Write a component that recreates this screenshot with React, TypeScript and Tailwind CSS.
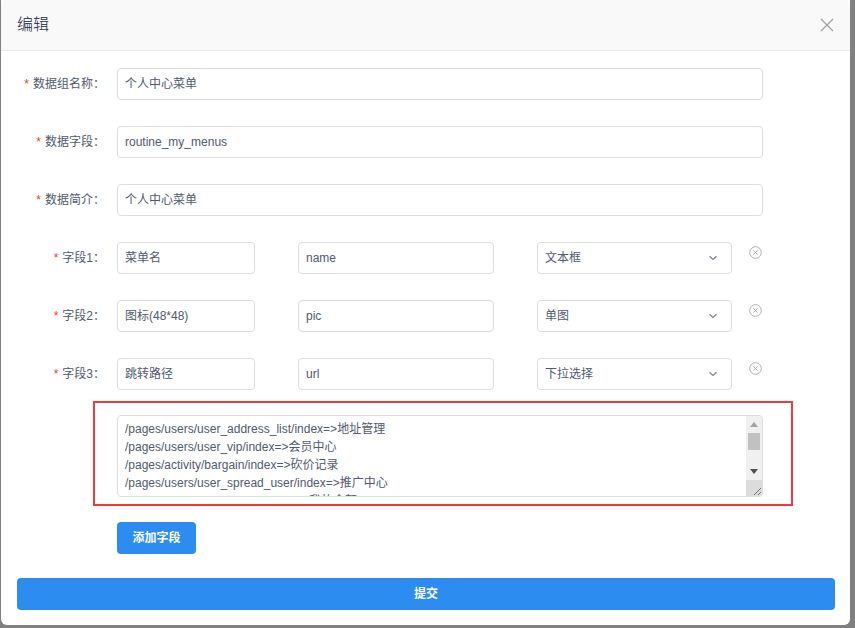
const labelCls = "w-[100px] shrink-0 pr-3 text-right text-xs text-[#515a6e]";
const inputCls = "h-8 rounded border border-[#dcdee2] bg-white px-[7px] flex items-center text-xs text-[#515a6e]";

function Label({ text }: { text: string }) {
  return (
    <div className={labelCls}>
      <span className="mr-1 text-[#ed4014]">*</span>
      {text}
    </div>
  );
}

function Chevron() {
  return (
    <svg width="10" height="6" viewBox="0 0 10 6" fill="none">
      <path d="M1.5 1.2L5 4.5l3.5-3.3" stroke="#808695" strokeWidth="1.2" />
    </svg>
  );
}

function RemoveIcon() {
  return (
    <svg width="13" height="13" viewBox="0 0 13 13" fill="none">
      <circle cx="6.5" cy="6.5" r="5.8" stroke="#a8a8a8" strokeWidth="0.9" />
      <path d="M4.4 4.4l4.2 4.2M8.6 4.4l-4.2 4.2" stroke="#a8a8a8" strokeWidth="0.9" />
    </svg>
  );
}

const basics = [
  { label: "数据组名称：", value: "个人中心菜单" },
  { label: "数据字段：", value: "routine_my_menus" },
  { label: "数据简介：", value: "个人中心菜单" },
];

const fields = [
  { label: "字段1：", title: "菜单名", name: "name", type: "文本框" },
  { label: "字段2：", title: "图标(48*48)", name: "pic", type: "单图" },
  { label: "字段3：", title: "跳转路径", name: "url", type: "下拉选择" },
];

const options = [
  "/pages/users/user_address_list/index=>地址管理",
  "/pages/users/user_vip/index=>会员中心",
  "/pages/activity/bargain/index=>砍价记录",
  "/pages/users/user_spread_user/index=>推广中心",
  "/pages/users/user_money/index=>我的余额",
  "/pages/users/user_goods_collection/index=>我的收藏",
];

export default function App() {
  return (
    <div className="w-[855px] h-[628px] overflow-hidden bg-[#808080] pl-px font-['Liberation_Sans','Noto_Sans_CJK_SC',sans-serif]">
      <div className="w-[849px] h-[625px] rounded-b-md bg-white flex flex-col">
        {/* header */}
        <div className="h-[51px] shrink-0 border-b border-[#e8eaec] bg-[#f9f9f9] rounded-t-sm flex items-center justify-between px-4">
          <span className="text-base text-[#17233d] font-light">编辑</span>
          <svg width="14" height="14" viewBox="0 0 14 14" fill="none">
            <path d="M1 1l12 12M13 1L1 13" stroke="#a0a0a0" strokeWidth="1.2" />
          </svg>
        </div>

        <div className="px-4 pt-[17px] flex flex-col">
          {basics.map((row) => (
            <div key={row.label} className="flex items-center mb-[26px]">
              <Label text={row.label} />
              <div className={inputCls + " w-[646px]"}>{row.value}</div>
            </div>
          ))}

          {fields.map((f, i) => (
            <div key={f.label} className={"flex items-start " + (i < fields.length - 1 ? "mb-[26px]" : "")}>
              <div className="h-8 flex items-center">
                <Label text={f.label} />
              </div>
              <div className={inputCls + " w-[138px]"}>{f.title}</div>
              <div className={inputCls + " w-[196px] ml-[43px]"}>{f.name}</div>
              <div className={inputCls + " w-[195px] ml-[43px] justify-between pr-[13px]"}>
                <span>{f.type}</span>
                <Chevron />
              </div>
              <div className="ml-[17px] mt-[4px]">
                <RemoveIcon />
              </div>
            </div>
          ))}

          {/* options box */}
          <div className="mt-[11px] ml-[76px] w-[700px] h-[105px] border-2 border-[#ef3a3a] pt-[12px] pl-[22px]">
            <div className="w-[646px] h-[82px] rounded border border-[#dcdee2] flex overflow-hidden">
              <div className="flex-1 overflow-hidden px-[7px] pt-[4px] text-xs leading-[18px] text-[#515a6e] whitespace-nowrap">
                {options.map((o) => (
                  <div key={o}>{o}</div>
                ))}
              </div>
              <div className="w-[16px] shrink-0 bg-[#f0f0f0] flex flex-col">
                <div className="h-[17px] flex items-center justify-center">
                  <svg width="8" height="5" viewBox="0 0 8 5">
                    <path d="M0 5L4 0l4 5z" fill="#a3a3a3" />
                  </svg>
                </div>
                <div className="mx-[2px] h-[17px] bg-[#c1c1c1]" />
                <div className="flex-1" />
                <div className="h-[17px] flex items-center justify-center">
                  <svg width="8" height="5" viewBox="0 0 8 5">
                    <path d="M0 0h8L4 5z" fill="#505050" />
                  </svg>
                </div>
                <div className="h-[16px] bg-[#dcdcdc] flex items-end justify-end">
                  <svg width="10" height="10" viewBox="0 0 10 10" fill="none">
                    <path d="M9 2L2 9M9 6L6 9" stroke="#555" strokeWidth="0.8" />
                  </svg>
                </div>
              </div>
            </div>
          </div>

          <button className="mt-4 ml-[100px] w-[79px] h-8 rounded bg-[#2d8cf0] text-xs font-semibold text-white">
            添加字段
          </button>

          <button className="mt-6 w-[818px] h-8 rounded bg-[#2d8cf0] text-xs font-semibold text-white">
            提交
          </button>
        </div>
      </div>
    </div>
  );
}
